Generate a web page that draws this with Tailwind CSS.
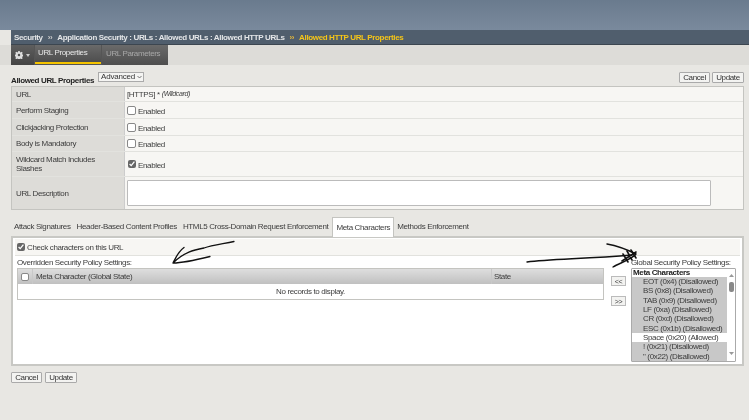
<!DOCTYPE html>
<html>
  <head>
    <meta charset="utf-8" />
    <title>Allowed HTTP URL Properties</title>
    <script src="https://cdn.jsdelivr.net/npm/@tailwindcss/browser@4"></script>
  </head>
  <body class="relative w-[749px] h-[420px] overflow-hidden bg-[#e8e7e3] text-[#3c3c3c] text-[8px] tracking-[-0.36px] blur-[0.4px] font-['Liberation_Sans',Arial,sans-serif]">
    <!-- banner -->
    <div class="h-[30px] bg-gradient-to-b from-[#6a7b8e] to-[#7a8a9d]"></div>

    <!-- breadcrumb -->
    <div class="ml-[11px] h-[15px] bg-[#505e6d] border-b border-[#3c4650] flex items-center pl-[3px] pt-px font-bold text-[#e4e6e8] whitespace-nowrap">
      <span>Security</span>
      <span class="mx-[5px] text-[#ccc]">››</span>
      <span>Application Security : URLs : Allowed URLs : Allowed HTTP URLs</span>
      <span class="mx-[5px] text-[#e8b93a]">››</span>
      <span class="text-[#f5c518]">Allowed HTTP URL Properties</span>
    </div>

    <!-- dark tabs -->
    <div class="h-[20px] bg-[#dddcd8] pl-[11px] flex">
      <div class="w-[157px] h-[20px] flex bg-[#555]">
        <div class="w-[23px] flex items-center justify-center gap-[3px] bg-gradient-to-b from-[#5e5e5e] to-[#444]">
          <svg class="w-[8px] h-[8px]" viewBox="0 0 16 16"><path fill="#ddd" fill-rule="evenodd" d="M6.500 0h3l.4 2.200 1.500.6 1.900-1.200 2.100 2.100-1.200 1.900.6 1.500 2.200.4v3l-2.200.4-.6 1.500 1.200 1.900-2.100 2.100-1.900-1.200-1.500.6-.4 2.200h-3l-.4-2.200-1.500-.6-1.900 1.200-2.100-2.100 1.200-1.900-.6-1.500-2.200-.4v-3l2.200-.4.6-1.500-1.200-1.900 2.100-2.100 1.900 1.200 1.500-.6zM8 5.500a2.500 2.500 0 100 5 2.500 2.500 0 000-5z"/></svg>
          <svg class="w-[4px] h-[3px]" viewBox="0 0 4 3"><path fill="#ccc" d="M0 0h4L2 3z"/></svg>
        </div>
        <div class="w-[66px] ml-px h-[19px] bg-gradient-to-b from-[#6a6a6a] to-[#4e4e4e] border-b-[2px] border-[#f5c400] text-[#e8e8e8] flex items-center pl-[3px] pb-px">URL Properties</div>
        <div class="w-[66px] ml-px bg-gradient-to-b from-[#6a6a6a] to-[#4e4e4e] text-[#a8a8a8] flex items-center pl-[4px] pb-[2px]">URL Parameters</div>
      </div>
    </div>

    <!-- title row -->
    <div class="mt-[6px] h-[15px] pl-[11px] pr-[5px] flex items-start justify-between">
      <div class="flex items-start">
        <span class="font-bold text-[#222] mt-[4px]">Allowed URL Properties</span>
        <div class="relative ml-[4px] mt-px">
          <select class="block w-[46px] h-[10px] appearance-none px-[2px] py-0 text-[8px] tracking-[-0.2px] leading-none bg-[#f4f4f2] border border-[#aaa] text-[#333]">
            <option>Advanced</option>
          </select>
          <svg class="absolute right-[2px] top-[3px] w-[5px] h-[4px]" viewBox="0 0 5 4" fill="none" stroke="#555" stroke-width="0.8"><path d="M.5 1l2 2 2-2"/></svg>
        </div>
      </div>
      <div class="flex gap-[2px] mt-px">
        <button class="w-[31px] h-[11px] bg-[#f3f3f1] border border-[#aaa] rounded-[1px] leading-none text-[#333]">Cancel</button>
        <button class="w-[32px] h-[11px] bg-[#f3f3f1] border border-[#aaa] rounded-[1px] leading-none text-[#333]">Update</button>
      </div>
    </div>

    <!-- properties table -->
    <div class="ml-[11px] mr-[5px] border border-[#c4c4c0] bg-[#f7f6f3]">
      <div class="flex h-[15px] border-b border-[#e2e2de]">
        <div class="w-[113px] shrink-0 bg-[#dddcd8] border-r border-[#ccc] pl-[4px] pt-px flex items-center">URL</div>
        <div class="pl-[2px] pt-px flex items-center">[HTTPS] * <i class="ml-[2px] text-[7px]">(Wildcard)</i></div>
      </div>
      <div class="flex h-[17px] border-b border-[#e2e2de]">
        <div class="w-[113px] shrink-0 bg-[#dddcd8] border-r border-[#ccc] pl-[4px] pt-px flex items-center">Perform Staging</div>
        <div class="pl-[2px] flex items-center gap-[2px]"><input type="checkbox" class="appearance-none w-[9px] h-[9px] m-0 bg-white border border-[#888] rounded-[2px]" /><span class="mt-[3px]">Enabled</span></div>
      </div>
      <div class="flex h-[17px] border-b border-[#e2e2de]">
        <div class="w-[113px] shrink-0 bg-[#dddcd8] border-r border-[#ccc] pl-[4px] pt-px flex items-center">Clickjacking Protection</div>
        <div class="pl-[2px] flex items-center gap-[2px]"><input type="checkbox" class="appearance-none w-[9px] h-[9px] m-0 bg-white border border-[#888] rounded-[2px]" /><span class="mt-[3px]">Enabled</span></div>
      </div>
      <div class="flex h-[16px] border-b border-[#e2e2de]">
        <div class="w-[113px] shrink-0 bg-[#dddcd8] border-r border-[#ccc] pl-[4px] pt-px flex items-center">Body is Mandatory</div>
        <div class="pl-[2px] flex items-center gap-[2px]"><input type="checkbox" class="appearance-none w-[9px] h-[9px] m-0 bg-white border border-[#888] rounded-[2px]" /><span class="mt-[3px]">Enabled</span></div>
      </div>
      <div class="flex h-[25px] border-b border-[#e2e2de]">
        <div class="w-[113px] shrink-0 bg-[#dddcd8] border-r border-[#ccc] pl-[4px] flex items-center leading-[9.5px]">Wildcard Match Includes<br />Slashes</div>
        <div class="pl-[3px] flex items-center gap-[2px]"><input type="checkbox" checked class="w-[8px] h-[8px] m-0 accent-[#666]" /><span class="mt-[3px]">Enabled</span></div>
      </div>
      <div class="flex h-[32px]">
        <div class="w-[113px] shrink-0 bg-[#dddcd8] border-r border-[#ccc] pl-[4px] pt-px flex items-center">URL Description</div>
        <div class="pl-[2px] pt-[3px]"><div class="w-[584px] h-[26px] bg-white border border-[#bbb] rounded-[1px]"></div></div>
      </div>
    </div>

    <!-- section tabs -->
    <div class="mt-[7px] ml-[11px] h-[20px] flex items-center relative z-10">
      <span class="ml-[3px] mt-[-1px]">Attack Signatures</span>
      <span class="ml-[6px] mt-[-1px]">Header-Based Content Profiles</span>
      <span class="ml-[6px] mt-[-1px]">HTML5 Cross-Domain Request Enforcement</span>
      <span class="ml-[4px] px-[3px] h-[20px] leading-[19px] bg-white border border-b-0 border-[#c4c4c0]">Meta Characters</span>
      <span class="ml-[3px] mt-[-1px]">Methods Enforcement</span>
    </div>

    <!-- meta characters panel -->
    <div class="ml-[11px] mr-[5px] mt-[-1px] h-[130px] border-2 border-[#c8c8c4] bg-white">
      <div class="h-[17px] mx-[2px] mt-px bg-[#f7f6f3] border-b border-[#e2e2de] flex items-center pl-[2px] gap-[2px]">
        <input type="checkbox" checked class="w-[8px] h-[8px] m-0 accent-[#666]" /><span class="mt-[2px]">Check characters on this URL</span>
      </div>
      <div class="flex px-[4px]">
        <div class="w-[587px] shrink-0">
          <div class="h-[11px] mt-px leading-[11px]">Overridden Security Policy Settings:</div>
          <div class="border border-[#c4c4c0]">
            <div class="h-[15px] flex bg-gradient-to-b from-[#dedede] to-[#c0c0c0]">
              <div class="w-[15px] border-r border-[#c8c8c8] flex items-center justify-center"><input type="checkbox" class="appearance-none w-[8px] h-[8px] m-0 bg-white border border-[#888] rounded-[2px]" /></div>
              <div class="flex-1 pl-[3px] flex items-center">Meta Character (Global State)</div>
              <div class="w-[112px] border-l border-[#c8c8c8] pl-[2px] flex items-center">State</div>
            </div>
            <div class="h-[15px] flex items-center justify-center">No records to display.</div>
          </div>
        </div>
        <div class="w-[27px] shrink-0 flex flex-col items-center pt-[20px] gap-[10px] pl-[2px]">
          <button class="w-[15px] h-[10px] bg-[#f3f3f1] border border-[#bbb] text-[7px] leading-none">&lt;&lt;</button>
          <button class="w-[15px] h-[10px] bg-[#f3f3f1] border border-[#bbb] text-[7px] leading-none">&gt;&gt;</button>
        </div>
        <div class="w-[105px] shrink-0">
          <div class="h-[11px] mt-px leading-[11px] whitespace-nowrap">Global Security Policy Settings:</div>
          <div class="h-[94px] border border-[#aaa] rounded-[1px] relative overflow-hidden leading-[9.33px] whitespace-nowrap">
            <div class="font-bold text-[#222] pl-px h-[8px] leading-[8px]">Meta Characters</div>
            <div class="w-[95px] bg-[#c8c8c8] pl-[11px]">EOT (0x4) (Disallowed)</div>
            <div class="w-[95px] bg-[#c8c8c8] pl-[11px]">BS (0x8) (Disallowed)</div>
            <div class="w-[95px] bg-[#c8c8c8] pl-[11px]">TAB (0x9) (Disallowed)</div>
            <div class="w-[95px] bg-[#c8c8c8] pl-[11px]">LF (0xa) (Disallowed)</div>
            <div class="w-[95px] bg-[#c8c8c8] pl-[11px]">CR (0xd) (Disallowed)</div>
            <div class="w-[95px] bg-[#c8c8c8] pl-[11px]">ESC (0x1b) (Disallowed)</div>
            <div class="w-[95px] pl-[11px]">Space (0x20) (Allowed)</div>
            <div class="w-[95px] bg-[#c8c8c8] pl-[11px]">! (0x21) (Disallowed)</div>
            <div class="w-[95px] bg-[#c8c8c8] pl-[11px]">" (0x22) (Disallowed)</div>
            <!-- scrollbar -->
            <div class="absolute right-0 top-0 bottom-0 w-[8px] bg-white">
              <svg class="absolute top-[5px] left-[2px] w-[5px] h-[3px]" viewBox="0 0 5 3"><path fill="#999" d="M0 3l2.500-3L5 3z"/></svg>
              <div class="absolute top-[13px] left-[2px] w-[5px] h-[10px] bg-[#888] rounded-[2px]"></div>
              <svg class="absolute bottom-[6px] left-[2px] w-[5px] h-[3px]" viewBox="0 0 5 3"><path fill="#999" d="M0 0l2.500 3L5 0z"/></svg>
            </div>
          </div>
        </div>
      </div>
    </div>

    <!-- bottom buttons -->
    <div class="ml-[11px] mt-[6px] flex gap-[3px]">
      <button class="w-[31px] h-[11px] bg-[#f3f3f1] border border-[#aaa] rounded-[1px] leading-none text-[#333]">Cancel</button>
      <button class="w-[32px] h-[11px] bg-[#f3f3f1] border border-[#aaa] rounded-[1px] leading-none text-[#333]">Update</button>
    </div>

    <!-- hand-drawn arrows -->
    <svg class="absolute inset-0 w-[749px] h-[420px] pointer-events-none z-20" viewBox="0 0 749 420" fill="none" stroke="#111" stroke-linecap="round" stroke-linejoin="round">
      <path stroke-width="1.300" d="M234 241.500C222 244 212 245 204 248C194 250 184 252 173 263C180 263 196 260 210 256.500M173 263C176 257 178 252 184 247.500"/>
      <path stroke-width="1.400" d="M527 262C550 259 585 259 632 255M607 244C618 246 628 250 636 254C632 259 620 263 613 267"/>
      <path stroke-width="1.600" d="M636 252L622 261M631 250L636 258M627 251L632 260M623 254L628 262"/>
    </svg>
  </body>
</html>
